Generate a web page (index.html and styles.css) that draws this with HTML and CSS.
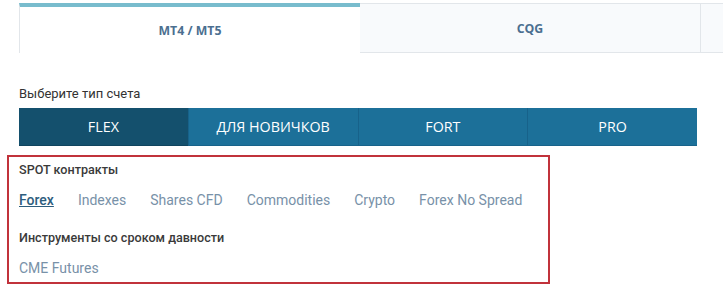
FILE: index.html
```html
<!DOCTYPE html>
<html lang="ru">
<head>
<meta charset="utf-8">
<link rel="stylesheet" href="styles.css">
</head>
<body>
<div class="page">
  <div class="tabs">
    <div class="tab active">MT4 / MT5</div>
    <div class="tab">CQG</div>
    <div class="tab tail"></div>
  </div>
  <div class="label">Выберите тип счета</div>
  <div class="types">
    <div class="type current">FLEX</div>
    <div class="type">ДЛЯ НОВИЧКОВ</div>
    <div class="type">FORT</div>
    <div class="type">PRO</div>
  </div>
  <div class="box">
    <div class="heading">SPOT контракты</div>
    <div class="links">
      <a class="link selected">Forex</a>
      <a class="link">Indexes</a>
      <a class="link">Shares CFD</a>
      <a class="link">Commodities</a>
      <a class="link">Crypto</a>
      <a class="link">Forex No Spread</a>
    </div>
    <div class="heading second">Инструменты со сроком давности</div>
    <div class="links">
      <a class="link">CME Futures</a>
    </div>
  </div>
</div>
</body>
</html>
```
FILE: styles.css
```css
* { box-sizing: border-box; }
html, body { margin: 0; padding: 0; background: #fff; }
body { width: 723px; height: 299px; overflow: hidden; font-family: Roboto, "Noto Sans", sans-serif; }
.page { padding-left: 19px; }
.tabs { display: flex; margin-top: 3px; height: 50px; width: 720px; overflow: hidden; }
.tab {
  flex: 0 0 341px;
  display: flex; align-items: center; justify-content: center;
  font-family: "Open Sans", sans-serif; font-weight: 700; font-size: 12.3px;
  color: #4b6f90;
  background: #f8fafc;
  border-top: 1px solid #e2e6ea;
  border-bottom: 1px solid #e2e6ea;
  border-right: 1px solid #e2e6ea;
}
.tab.active {
  background: #fff;
  border-top: 4px solid #78bccd;
  border-bottom: none;
  border-right: none;
  border-left: 1px solid #e2e6ea;
}
.tab.tail { flex: 0 0 40px; border-right: none; }
.label { margin-top: 33px; font-size: 13px; line-height: 16px; color: #333; }
.types { display: flex; margin-top: 6px; width: 678px; height: 38px; }
.type {
  flex: 1 1 0;
  display: flex; align-items: center; justify-content: center;
  background: #1c7099;
  color: #fff;
  font-family: "Open Sans", sans-serif; font-size: 14.3px;
  border-left: 1px solid #17628a;
  border-bottom: 1px solid #18638a;
}
.type:first-child { border-left: none; }
.type.current { background: #14506d; border-bottom-color: #10445e; }
.box {
  margin-left: -12px;
  margin-top: 9px;
  width: 543px;
  border: 2px solid #c1323b;
  padding: 5px 10px 4px;
}
.heading { font-size: 12.6px; font-weight: 500; line-height: 16px; color: #3a3a3a; }
.heading.second { margin-top: 20px; }
.links { display: flex; gap: 24px; margin-top: 12px; line-height: 20px; }
.link { font-size: 14px; font-weight: 400; color: #7891a8; text-decoration: none; }
.link.selected { color: #2d5d7d; font-weight: 500; text-decoration: underline; }
```
